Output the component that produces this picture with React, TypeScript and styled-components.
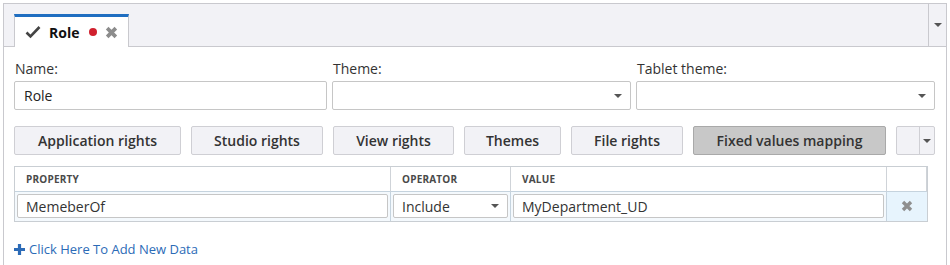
import { FunctionComponent } from "react";
import styled, { createGlobalStyle } from "styled-components";

const GlobalStyle = createGlobalStyle`
  body {
    margin: 0;
    background: #fff;
    font-family: "Open Sans", "Noto Sans", sans-serif;
    color: #333;
  }
`;

// Styled Components
const Frame = styled.div`
  margin: 3px 0 0 3px;
  width: 944px;
  box-sizing: border-box;
`;

const TabStrip = styled.div`
  height: 44px;
  box-sizing: border-box;
  background: #f2f2f6;
  border: 1px solid #c9c9ce;
  display: flex;
  align-items: flex-end;
  padding-left: 10px;
`;

const Tab = styled.div`
  width: 115px;
  height: 33px;
  box-sizing: border-box;
  background: #fff;
  border-top: 3px solid #1f6ec1;
  border-left: 1px solid #c9c9ce;
  border-right: 1px solid #c9c9ce;
  margin-bottom: -1px;
  display: flex;
  align-items: center;
  padding-left: 10px;
  gap: 8px;
  font-weight: 700;
  font-size: 14px;
  color: #111;
`;

const Dot = styled.span`
  width: 8px;
  height: 8px;
  border-radius: 50%;
  background: #d0202e;
  margin-left: 2px;
`;

const StripMenu = styled.div`
  margin-left: auto;
  align-self: stretch;
  width: 17px;
  border-left: 1px solid #c9c9ce;
  display: flex;
  align-items: center;
  justify-content: center;
`;

const Content = styled.div`
  border-left: 1px solid #c9c9ce;
  border-right: 1px solid #c9c9ce;
  padding: 12px 10px 0 10px;
  height: 218px;
  box-sizing: border-box;
`;

const Fields = styled.div`
  display: grid;
  grid-template-columns: 313px 299px 299px;
  column-gap: 5px;
`;

const Field = styled.div`
  display: flex;
  flex-direction: column;
`;

const Label = styled.label`
  font-size: 14px;
  line-height: 20px;
  color: #333;
  padding-left: 1px;
  margin-bottom: 2px;
`;

const Box = styled.div<{ $h?: number }>`
  height: ${(p) => p.$h ?? 29}px;
  box-sizing: border-box;
  border: 1px solid #c6c6c6;
  border-radius: 2px;
  background: #fff;
  display: flex;
  align-items: center;
  padding: 0 8px 0 9px;
  font-size: 14px;
  color: #222;
`;

const Caret = styled.span`
  margin-left: auto;
  width: 0;
  height: 0;
  border-left: 4px solid transparent;
  border-right: 4px solid transparent;
  border-top: 4px solid #555;
`;

const ButtonRow = styled.div`
  display: flex;
  gap: 10px;
  margin-top: 16px;
`;

const TabButton = styled.button<{ $w: number; $active?: boolean }>`
  width: ${(p) => p.$w}px;
  height: 29px;
  box-sizing: border-box;
  border: 1px solid ${(p) => (p.$active ? "#a9a9a9" : "#cfcfd4")};
  border-radius: 2px;
  background: ${(p) => (p.$active ? "#c8c8c8" : "#f2f2f6")};
  font-family: "Open Sans", sans-serif;
  font-weight: 600;
  font-size: 14px;
  color: #333;
  padding: 0;
`;

const SplitButton = styled.div`
  width: 39px;
  height: 29px;
  box-sizing: border-box;
  border: 1px solid #cfcfd4;
  border-radius: 2px;
  background: #f2f2f6;
  display: grid;
  grid-template-columns: 22px 1fr;
  & > span:last-child {
    border-left: 1px solid #cfcfd4;
    display: flex;
    align-items: center;
    justify-content: center;
  }
`;

const Table = styled.div`
  margin-top: 11px;
  width: 912px;
  border: 1px solid #c9ced3;
  display: grid;
  grid-template-columns: 376px 120px 376px 1fr;
`;

const HeadCell = styled.div`
  height: 24px;
  border-right: 1px solid #cfd3d8;
  border-bottom: 1px solid #c5d3de;
  display: flex;
  align-items: center;
  padding-left: 11px;
  font-size: 10px;
  font-weight: 700;
  letter-spacing: 0.2px;
  color: #4a4a4a;
  &:last-child {
    border-right: none;
  }
`;

const Cell = styled.div<{ $blue?: boolean }>`
  height: 29px;
  box-sizing: border-box;
  border-right: 1px solid #c5d3de;
  padding: 2px 2px 3px 2px;
  background: ${(p) => (p.$blue ? "#e7f4fd" : "#f4f9fd")};
  display: flex;
  align-items: center;
  justify-content: center;
  &:last-child {
    border-right: none;
  }
`;

const CellBox = styled(Box)`
  flex: 1;
  height: 24px;
  font-size: 14px;
  padding-left: 8px;
  color: #333;
`;

const AddLink = styled.a`
  display: inline-flex;
  align-items: center;
  gap: 4px;
  margin-top: 18px;
  font-size: 13px;
  color: #2c6bb7;
  text-decoration: none;
`;

const CheckIcon = () => (
  <svg width="16" height="14" viewBox="0 0 16 14">
    <path d="M1.5 7.5 L5.5 11.5 L14.5 2" fill="none" stroke="#444" strokeWidth="2.6" />
  </svg>
);

const CrossIcon = ({ size = 12, color = "#8a8a8a" }: { size?: number; color?: string }) => (
  <svg width={size} height={size} viewBox="0 0 12 12">
    <path d="M2 2 L10 10 M10 2 L2 10" stroke={color} strokeWidth="3.4" strokeLinecap="butt" />
  </svg>
);

const PlusIcon = () => (
  <svg width="11" height="11" viewBox="0 0 11 11">
    <path d="M5.5 0 V11 M0 5.5 H11" stroke="#2c6bb7" strokeWidth="3.2" />
  </svg>
);

const buttons: { label: string; w: number; active?: boolean }[] = [
  { label: "Application rights", w: 167 },
  { label: "Studio rights", w: 132 },
  { label: "View rights", w: 121 },
  { label: "Themes", w: 97 },
  { label: "File rights", w: 112 },
  { label: "Fixed values mapping", w: 193, active: true },
];

// Component
const App: FunctionComponent = () => {
  return (
    <Frame>
      <GlobalStyle />
      <TabStrip>
        <Tab>
          <CheckIcon />
          <span>Role</span>
          <Dot />
          <CrossIcon size={13} color="#8c8c8c" />
        </Tab>
        <StripMenu>
          <Caret style={{ margin: 0 }} />
        </StripMenu>
      </TabStrip>

      <Content>
        <Fields>
          <Field>
            <Label>Name:</Label>
            <Box>Role</Box>
          </Field>
          <Field>
            <Label>Theme:</Label>
            <Box>
              <Caret />
            </Box>
          </Field>
          <Field>
            <Label>Tablet theme:</Label>
            <Box>
              <Caret />
            </Box>
          </Field>
        </Fields>

        <ButtonRow>
          {buttons.map((b) => (
            <TabButton key={b.label} $w={b.w} $active={b.active}>
              {b.label}
            </TabButton>
          ))}
          <SplitButton>
            <span />
            <span>
              <Caret style={{ margin: 0 }} />
            </span>
          </SplitButton>
        </ButtonRow>

        <Table>
          <HeadCell>PROPERTY</HeadCell>
          <HeadCell>OPERATOR</HeadCell>
          <HeadCell>VALUE</HeadCell>
          <HeadCell />
          <Cell>
            <CellBox>MemeberOf</CellBox>
          </Cell>
          <Cell>
            <CellBox>
              Include
              <Caret />
            </CellBox>
          </Cell>
          <Cell>
            <CellBox>MyDepartment_UD</CellBox>
          </Cell>
          <Cell $blue>
            <CrossIcon size={12} color="#8f8f8f" />
          </Cell>
        </Table>

        <AddLink href="#add">
          <PlusIcon />
          Click Here To Add New Data
        </AddLink>
      </Content>
    </Frame>
  );
};

export default App;
